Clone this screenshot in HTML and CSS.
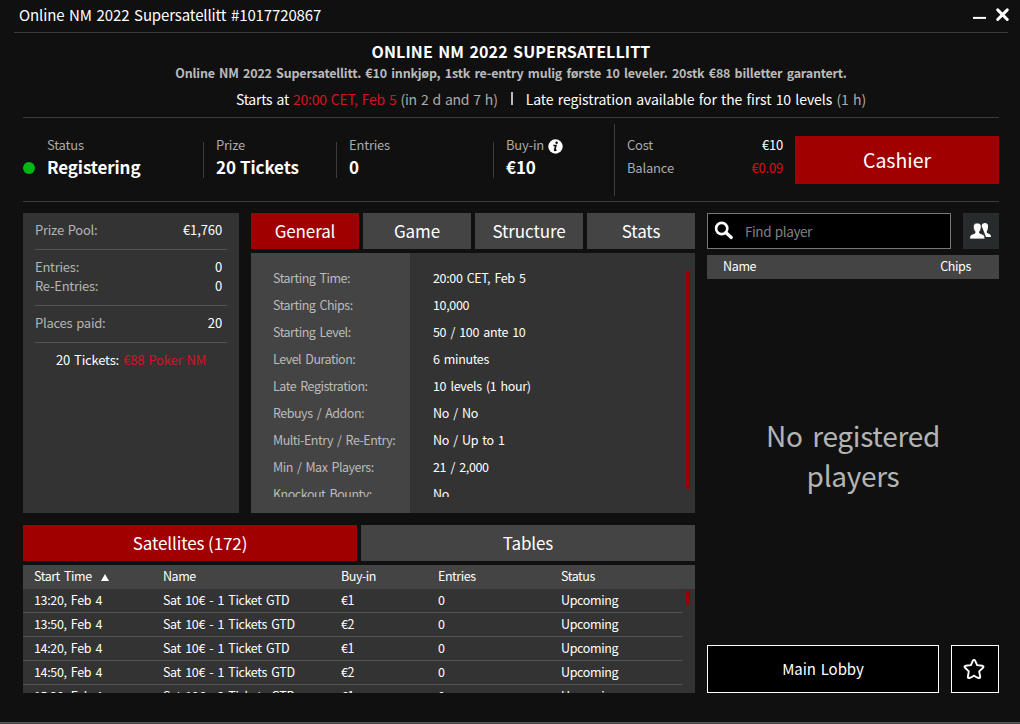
FILE: index.html
```html
<!DOCTYPE html>
<html lang="en">
<head>
<meta charset="utf-8">
<title>Online NM 2022 Supersatellitt #1017720867</title>
<link rel="stylesheet" href="styles.css">
</head>
<body>
<div class="window">
  <header class="titlebar">
    <span class="titlebar-text">Online NM 2022 Supersatellitt #1017720867</span>
    <svg class="window-controls" width="38" height="16" viewBox="0 0 38 16"><path d="M1 10.900h13" stroke="#fff" stroke-width="2"/><path d="M25.700 2.900l9.600 9.600M35.300 2.900l-9.600 9.600" stroke="#fff" stroke-width="3" stroke-linecap="round"/></svg>
  </header>

  <section class="intro">
    <h1 class="intro-title">ONLINE NM 2022 SUPERSATELLITT</h1>
    <p class="intro-desc">Online NM 2022 Supersatellitt. €10 innkjøp, 1stk re-entry mulig første 10 leveler. 20stk €88 billetter garantert.</p>
    <p class="intro-time"><span class="starts">Starts at <em>20:00 CET, Feb 5</em> <i>(in 2 d and 7 h)</i></span><span class="pipe"></span><span class="late">Late registration available for the first 10 levels <i>(1 h)</i></span></p>
  </section>

  <section class="summary">
    <div class="stat stat-status"><span class="dot"></span><div class="stat-text"><div class="stat-label">Status</div><div class="stat-value">Registering</div></div></div>
    <div class="stat stat-prize"><div class="stat-text"><div class="stat-label">Prize</div><div class="stat-value">20 Tickets</div></div></div>
    <div class="stat stat-entries"><div class="stat-text"><div class="stat-label">Entries</div><div class="stat-value">0</div></div></div>
    <div class="stat stat-buyin"><div class="stat-text"><div class="stat-label">Buy-in <svg class="info" width="15" height="15" viewBox="0 0 15 15"><circle cx="7.500" cy="7.500" r="7.200" fill="#fff"/><circle cx="8.600" cy="3.700" r="1.250" fill="#111"/><path d="M5.300 6.500h2.600l-1.300 4.600q0 .7 1.900-.4" fill="none" stroke="#111" stroke-width="1.700"/></svg></div><div class="stat-value">€10</div></div></div>
    <div class="money">
      <div class="money-row"><span>Cost</span><b>€10</b></div>
      <div class="money-row"><span>Balance</span><b class="low">€0.09</b></div>
    </div>
    <button class="cashier">Cashier</button>
  </section>

  <main class="content">
    <div class="left">
      <div class="top">
        <aside class="pool">
          <div class="pool-group"><div class="pool-row"><span>Prize Pool:</span><b>€1,760</b></div></div>
          <div class="pool-group"><div class="pool-row"><span>Entries:</span><b>0</b></div><div class="pool-row"><span>Re-Entries:</span><b>0</b></div></div>
          <div class="pool-group"><div class="pool-row"><span>Places paid:</span><b>20</b></div></div>
          <div class="pool-tickets">20 Tickets: <em>€88 Poker NM</em></div>
        </aside>
        <div class="details">
          <nav class="tabs">
            <button class="tab active">General</button><button class="tab">Game</button><button class="tab">Structure</button><button class="tab">Stats</button>
          </nav>
          <div class="info-panel">
            <div class="info-scroll">
              <dl class="info-list">
                <dt>Starting Time:</dt><dd>20:00 CET, Feb 5</dd>
                <dt>Starting Chips:</dt><dd>10,000</dd>
                <dt>Starting Level:</dt><dd>50 / 100 ante 10</dd>
                <dt>Level Duration:</dt><dd>6 minutes</dd>
                <dt>Late Registration:</dt><dd>10 levels (1 hour)</dd>
                <dt>Rebuys / Addon:</dt><dd>No / No</dd>
                <dt>Multi-Entry / Re-Entry:</dt><dd>No / Up to 1</dd>
                <dt>Min / Max Players:</dt><dd>21 / 2,000</dd>
                <dt>Knockout Bounty:</dt><dd>No</dd>
              </dl>
            </div>
            <span class="scrollbar"></span>
          </div>
        </div>
      </div>
      <div class="lists">
        <nav class="tabs">
          <button class="tab active">Satellites (172)</button><button class="tab">Tables</button>
        </nav>
        <div class="table">
          <div class="row thead"><span>Start Time <svg class="sort" width="8" height="7" viewBox="0 0 8 7"><path d="M4 0l4 7H0z" fill="#fff"/></svg></span><span>Name</span><span>Buy-in</span><span>Entries</span><span>Status</span></div>
          <div class="tbody">
            <div class="rows">
              <div class="row"><span>13:20, Feb 4</span><span>Sat 10€ - 1 Ticket GTD</span><span>€1</span><span>0</span><span>Upcoming</span></div>
              <div class="row"><span>13:50, Feb 4</span><span>Sat 10€ - 1 Tickets GTD</span><span>€2</span><span>0</span><span>Upcoming</span></div>
              <div class="row"><span>14:20, Feb 4</span><span>Sat 10€ - 1 Ticket GTD</span><span>€1</span><span>0</span><span>Upcoming</span></div>
              <div class="row"><span>14:50, Feb 4</span><span>Sat 10€ - 1 Tickets GTD</span><span>€2</span><span>0</span><span>Upcoming</span></div>
              <div class="row"><span>15:20, Feb 4</span><span>Sat 10€ - 2 Tickets GTD</span><span>€1</span><span>0</span><span>Upcoming</span></div>
            </div>
            <span class="scrollbar"></span>
          </div>
        </div>
      </div>
    </div>

    <aside class="right">
      <div class="find">
        <label class="search"><svg width="20" height="20" viewBox="0 0 20 20"><circle cx="7.700" cy="7.500" r="5.600" fill="none" stroke="#fff" stroke-width="2.600"/><path d="M11.800 11.500l5.500 5" stroke="#fff" stroke-width="3.200" stroke-linecap="round"/></svg><span>Find player</span></label>
        <button class="people"><svg width="22" height="18" viewBox="0 0 22 18"><path d="M12.500 3.500Q13 1 15.800 1q3.700 0 3.200 4.200-.2 2.600-1.200 3.900v1.700l3 1.400q1.200.6 1.200 2.800h-5z" fill="#fff"/><path d="M8.300 1c3.100 0 4.200 1.700 3.900 4.600-.2 2.200-1 3.300-1.600 4v1.500l4 1.700q1.400.7 1.400 4.200H.6q0-3.500 1.400-4.200l4-1.700V9.600c-.6-.7-1.400-1.800-1.600-4C4.100 2.700 5.200 1 8.300 1z" fill="#fff" stroke="#282b2c" stroke-width=".8"/></svg></button>
      </div>
      <div class="players-head"><span>Name</span><span>Chips</span></div>
      <div class="empty">No registered<br>players</div>
      <div class="actions">
        <button class="lobby">Main Lobby</button>
        <button class="star"><svg width="24" height="24" viewBox="0 0 24 24"><path d="M12 2.900q.8 0 1.100.8l2 4.400 5.400.7q1.600.5.700 1.700l-4 3.900 1 5.600q-.2 1.500-1.600 1Q13.800 20.200 12 18.600 10.200 20.200 7.400 21q-1.400.5-1.600-1l1-5.600-4-3.900q-.9-1.200.7-1.700l5.400-.7 2-4.400q.3-.8 1.100-.8z" fill="none" stroke="#fff" stroke-width="1.900" stroke-linejoin="round"/></svg></button>
      </div>
    </aside>
  </main>
  <footer class="edge"></footer>
</div>
</body>
</html>
```
FILE: styles.css
```css
* { box-sizing: border-box; }
body {
  margin: 0;
  background: #101010;
  color: #fff;
  font: 13px/20px "Noto Sans CJK SC", "Noto Sans", sans-serif;
}
h1, p, dl, dd { margin: 0; }
em, i, b { font-style: normal; font-weight: 400; }
button { border: 0; padding: 0; margin: 0; font: inherit; color: inherit; display: flex; align-items: center; justify-content: center; }
svg { display: block; flex: none; }
.window { width: 1020px; height: 724px; overflow: hidden; display: flex; flex-direction: column; white-space: nowrap; }

.titlebar { flex: none; height: 33px; margin: 0 12px 0 14px; padding: 0 0 2px 5px; border-bottom: 1px solid #3c3c3c; display: flex; align-items: center; justify-content: space-between; }
.titlebar-text { font-size: 15px; letter-spacing: -.13px; word-spacing: 1.500px; }
.window-controls { margin-right: -2px; }

.intro { flex: none; height: 85px; margin: 0 21px 0 23px; border-bottom: 1px solid #3c3c3c; text-align: center; padding-top: 6px; }
.intro-title { font-size: 16px; line-height: 24px; font-weight: 700; letter-spacing: .12px; word-spacing: 1.600px; }
.intro-desc { font-size: 12.500px; font-weight: 700; color: #bbb; line-height: 20px; letter-spacing: -.2px; word-spacing: 1.700px; }
.intro-time { font-size: 14px; line-height: 20px; margin-top: 6px; display: flex; justify-content: center; align-items: center; padding-left: 80px; }
.intro-time em { color: #d51224; }
.intro-time i { color: #aaa; }
.starts { letter-spacing: -.23px; word-spacing: 1.100px; }
.late { letter-spacing: -.06px; word-spacing: 1.100px; }
.pipe { width: 2px; height: 13px; background: #bbb; margin: 0 13px 1px; }

.summary { flex: none; height: 84px; margin: 0 21px 0 23px; border-bottom: 1px solid #3c3c3c; display: flex; align-items: center; }
.stat { height: 36px; display: flex; align-items: center; padding-left: 12px; border-left: 1px solid #3c3c3c; }
.stat-status { width: 180px; padding: 0; border: 0; }
.stat-prize { width: 133px; }
.stat-entries { width: 157px; }
.stat-buyin { width: 121px; }
.stat-text { padding-bottom: 7px; }
.stat-label { color: #aaa; line-height: 22px; display: flex; align-items: center; gap: 5px; letter-spacing: -.2px; }
.info { margin: 2px 0 0 -1px; }
.stat-value { font-size: 17px; font-weight: 700; line-height: 22px; letter-spacing: -.12px; word-spacing: .5px; }
.dot { width: 12px; height: 12px; border-radius: 50%; background: #00b614; margin: 17px 12px 0 0; }
.money { width: 181px; height: 72px; border-left: 1px solid #3c3c3c; padding: 9px 12px 0; letter-spacing: -.2px; }
.money-row { display: flex; justify-content: space-between; line-height: 23px; color: #aaa; }
.money-row b { color: #fff; }
.money-row .low { color: #e00b12; }
.cashier { width: 204px; height: 48px; background: #a00000; font-size: 19.500px; }

.content { flex: none; height: 480px; margin: 11px 21px 0 23px; display: flex; gap: 12px; }
.left { width: 672px; display: flex; flex-direction: column; gap: 12px; }
.top { height: 300px; display: flex; gap: 12px; }
.pool { width: 216px; background: #333; padding: 0 12px; letter-spacing: -.25px; word-spacing: 1.200px; }
.pool-group { border-bottom: 1px solid #555; padding: 7px 5px 10px 0; }
.pool-row { display: flex; justify-content: space-between; line-height: 19px; color: #b4b4b4; }
.pool-row b { color: #fff; letter-spacing: -.1px; }
.pool-tickets { text-align: center; line-height: 19px; margin-top: 7px; word-spacing: 1.500px; letter-spacing: -.2px; }
.pool-tickets em { color: #d51224; }

.details { flex: 1; display: flex; flex-direction: column; gap: 4px; }
.tabs { display: flex; gap: 4px; height: 36px; flex: none; }
.tab { flex: 1 1 0; background: #444; font-size: 17px; letter-spacing: -.12px; }
.tab.active { background: #a00000; }
.info-panel { flex: 1; position: relative; background: linear-gradient(90deg, #444 159px, #333 159px); padding-top: 12px; }
.info-scroll { height: 232px; overflow: hidden; }
.info-list { margin-top: -1px; display: grid; grid-template-columns: 160px 1fr; padding-left: 22px; line-height: 27px; }
.info-list, .table, .players-head { font-size: 12.500px; letter-spacing: -.35px; word-spacing: 1.800px; }
.info-list dt { color: #bbb; letter-spacing: -.48px; }
.scrollbar { position: absolute; right: 5px; width: 4px; background: #980006; border-radius: 1px; }
.info-panel .scrollbar { top: 18px; height: 218px; }

.lists { flex: 1; display: flex; flex-direction: column; gap: 4px; }
.table { height: 128px; background: #333; overflow: hidden; }
.row { display: grid; grid-template-columns: 129px 178px 97px 123px 1fr; height: 24px; line-height: 22px; padding-left: 11px; border-bottom: 1px solid #555; }
.thead { background: #444; border: 0; letter-spacing: -.45px; }
.thead span { height: 22px; display: flex; align-items: center; gap: 9px; }
.sort { margin-top: 2px; }
.tbody { position: relative; }
.rows { margin-right: 13px; }
.tbody .scrollbar { top: 2px; height: 14px; }

.right { width: 292px; display: flex; flex-direction: column; }
.find { display: flex; gap: 12px; height: 36px; }
.search { width: 244px; border: 1px solid #777; background: #000; color: #808080; display: flex; align-items: center; gap: 11px; padding-left: 6px; font-size: 13.500px; letter-spacing: -.4px; word-spacing: 1px; }
.people { width: 36px; background: #282b2c; padding-right: 2px; }
.players-head { margin-top: 6px; height: 24px; line-height: 22px; background: #444; display: flex; justify-content: space-between; padding: 0 28px 0 16px; }
.empty { flex: 1; display: flex; align-items: center; justify-content: center; text-align: center; font-size: 28px; line-height: 40px; letter-spacing: -.3px; word-spacing: 3.500px; color: #b4b4b4; padding-bottom: 14px; }
.actions { display: flex; gap: 12px; }
.lobby, .star { height: 48px; border: 1px solid #fff; background: #000; }
.lobby { width: 232px; font-size: 15px; letter-spacing: -.05px; word-spacing: 1.500px; }
.star { width: 48px; padding-right: 2px; }
.edge { margin-top: auto; height: 2px; background: #444; border-top: 1px solid #5a5a5a; }
```
